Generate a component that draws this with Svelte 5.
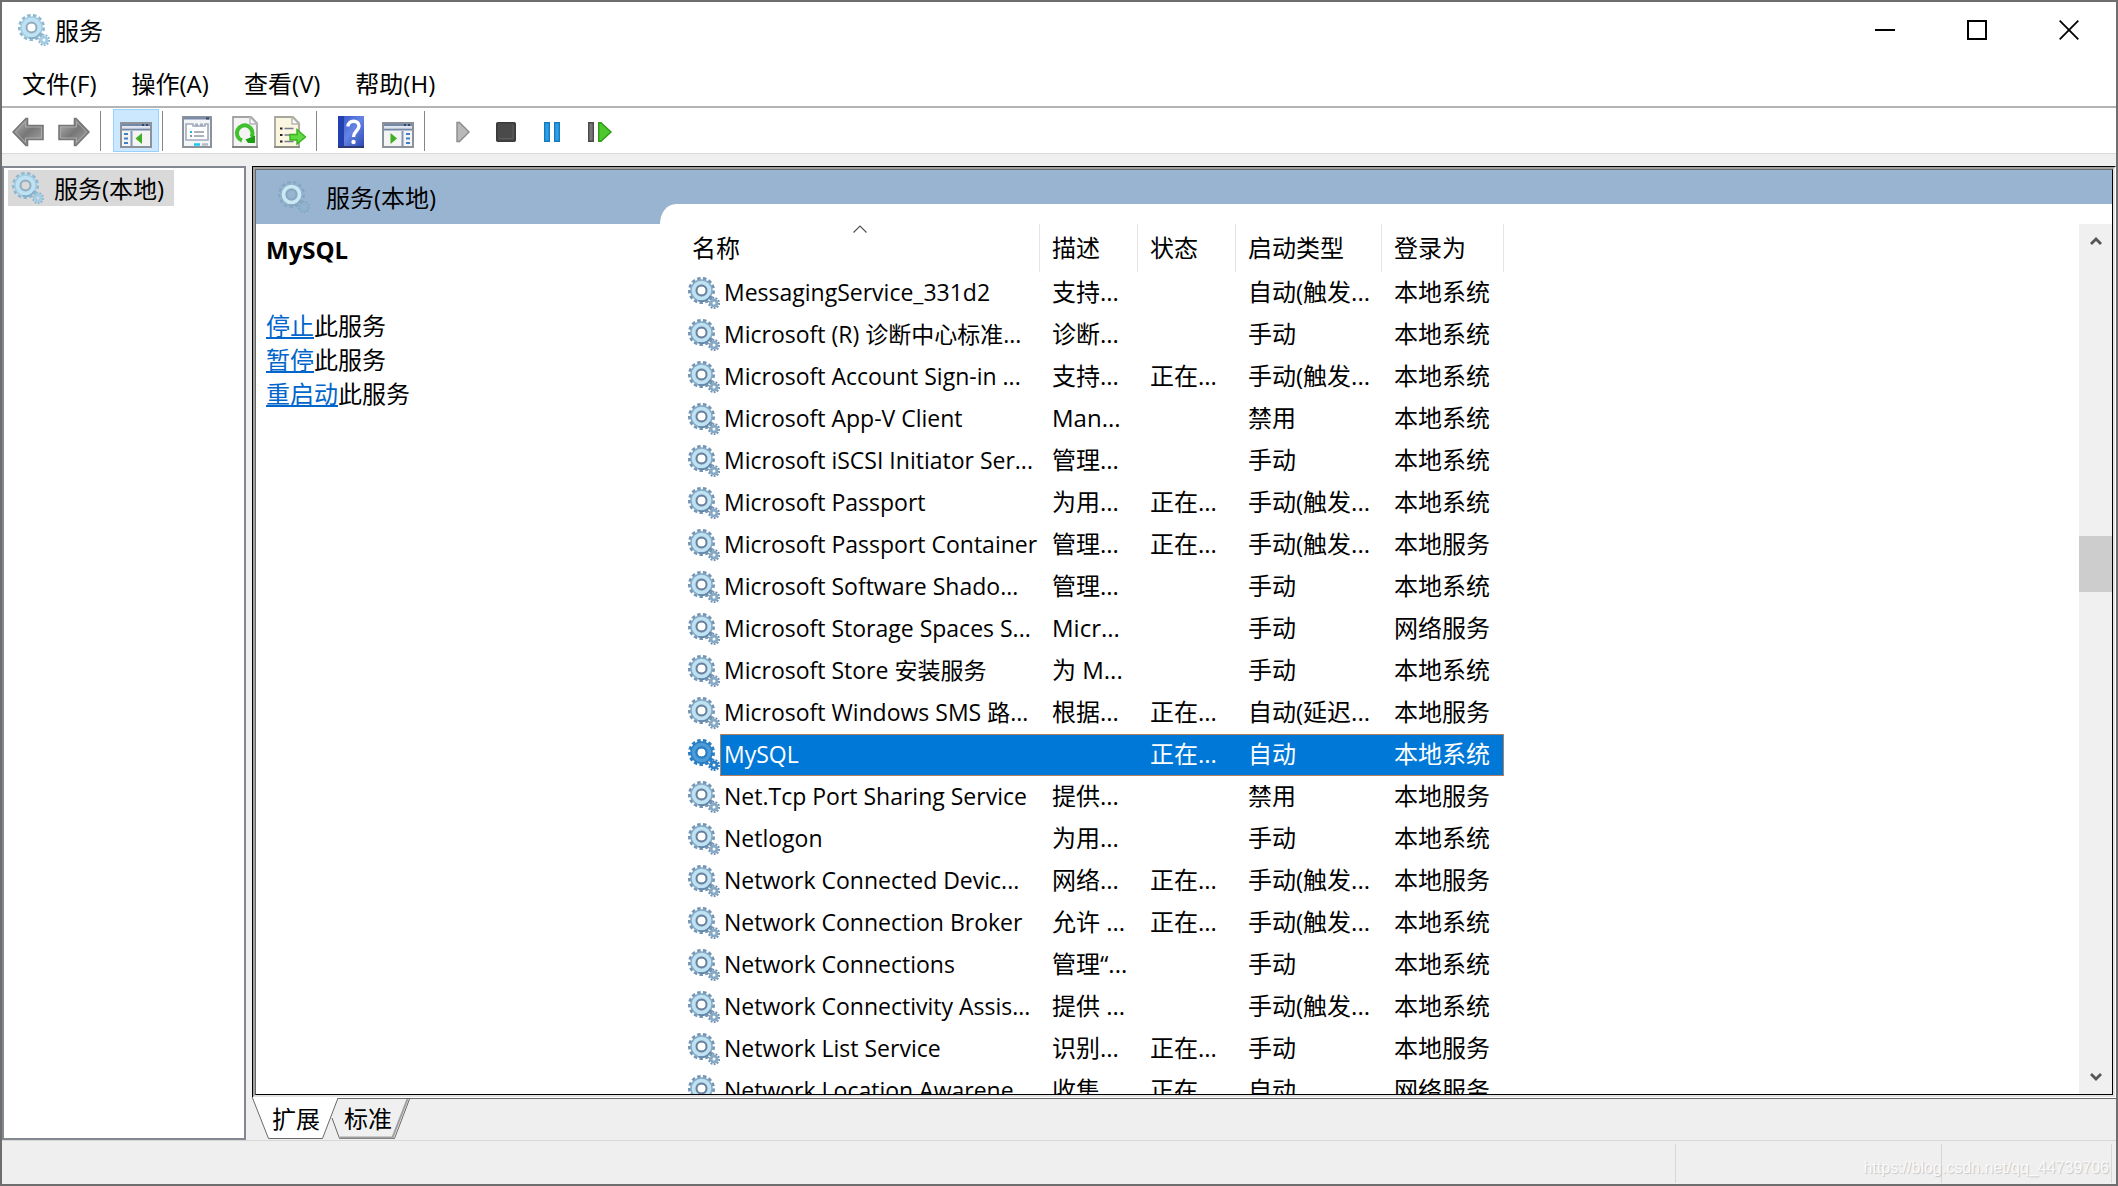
<script lang="ts">
	type Service = [string, string, string, string, string];

	const menus = ["文件(F)", "操作(A)", "查看(V)", "帮助(H)"];

	const services: Service[] = [
		["MessagingService_331d2", "支持...", "", "自动(触发...", "本地系统"],
		["Microsoft (R) 诊断中心标准...", "诊断...", "", "手动", "本地系统"],
		["Microsoft Account Sign-in ...", "支持...", "正在...", "手动(触发...", "本地系统"],
		["Microsoft App-V Client", "Man...", "", "禁用", "本地系统"],
		["Microsoft iSCSI Initiator Ser...", "管理...", "", "手动", "本地系统"],
		["Microsoft Passport", "为用...", "正在...", "手动(触发...", "本地系统"],
		["Microsoft Passport Container", "管理...", "正在...", "手动(触发...", "本地服务"],
		["Microsoft Software Shado...", "管理...", "", "手动", "本地系统"],
		["Microsoft Storage Spaces S...", "Micr...", "", "手动", "网络服务"],
		["Microsoft Store 安装服务", "为 M...", "", "手动", "本地系统"],
		["Microsoft Windows SMS 路...", "根据...", "正在...", "自动(延迟...", "本地服务"],
		["MySQL", "", "正在...", "自动", "本地系统"],
		["Net.Tcp Port Sharing Service", "提供...", "", "禁用", "本地服务"],
		["Netlogon", "为用...", "", "手动", "本地系统"],
		["Network Connected Devic...", "网络...", "正在...", "手动(触发...", "本地服务"],
		["Network Connection Broker", "允许 ...", "正在...", "手动(触发...", "本地系统"],
		["Network Connections", "管理“...", "", "手动", "本地系统"],
		["Network Connectivity Assis...", "提供 ...", "", "手动(触发...", "本地系统"],
		["Network List Service", "识别...", "正在...", "手动", "本地服务"],
		["Network Location Awarene...", "收集...", "正在...", "自动", "网络服务"],
	];

	let selected = $state(11);
	let treeShown = $state(true);
</script>

{#snippet gear(kind: string)}
	<svg class="gear {kind}" viewBox="0 0 32 32" width="32" height="32" aria-hidden="true">
		<g fill="none">
			<circle class="teeth" cx="13.5" cy="13.5" r="11.8" stroke-width="3.400" pathLength="26" stroke-dasharray="1.200 .800" />
			<circle class="ring" cx="13.5" cy="13.5" r="7.800" stroke-width="7" />
			<circle class="shine" cx="13.5" cy="13.5" r="8" stroke-width="3.600" />
			<circle class="rim" cx="13.5" cy="13.5" r="4.900" stroke-width="1.600" />
			<path class="shade" d="M22.500 19a10.800 10.800 0 0 1-12 4.800" stroke-width="1.600" />
			<circle class="teeth" cx="26" cy="26" r="4.800" stroke-width="2.600" pathLength="20" stroke-dasharray="1.200 .800" />
			<circle class="ring" cx="26" cy="26" r="2.900" stroke-width="2.800" />
		</g>
	</svg>
{/snippet}

<div class="window">
	<header class="titlebar">
		{@render gear("light")}
		<h1>服务</h1>
		<div class="controls">
			<button type="button" aria-label="最小化">
				<svg viewBox="0 0 20 20" width="20" height="20"><path d="M0 10h20" stroke="#000" stroke-width="2" /></svg>
			</button>
			<button type="button" aria-label="最大化">
				<svg viewBox="0 0 20 20" width="20" height="20"><rect x="1" y="1" width="18" height="18" fill="none" stroke="#000" stroke-width="2" /></svg>
			</button>
			<button type="button" aria-label="关闭">
				<svg viewBox="0 0 20 20" width="20" height="20"><path d="M.7.7l18.6 18.6M19.3.7L.7 19.3" stroke="#000" stroke-width="1.8" /></svg>
			</button>
		</div>
	</header>

	<nav class="menubar">
		{#each menus as menu}
			<button type="button">{menu}</button>
		{/each}
	</nav>

	<div class="toolbar">
		<button type="button" aria-label="后退">
			<svg viewBox="0 0 32 32" width="32" height="32">
				<defs>
					<linearGradient id="steel" x2="1" y2="1"><stop offset="0" stop-color="#bbb" /><stop offset=".5" stop-color="#777" /><stop offset="1" stop-color="#a8a8a8" /></linearGradient>
				</defs>
				<path d="M1 16L14 2.5h1.500v7H31v14H15.500v6H14z" fill="url(#steel)" stroke="#777" stroke-width="1.6" />
				<path d="M3.500 16L13.500 5.500v5.500H29.500v11H13.500v4.500z" fill="none" stroke="#aaa" stroke-width="1" />
			</svg>
		</button>
		<button type="button" aria-label="前进">
			<svg viewBox="0 0 32 32" width="32" height="32">
				<path d="M31 16L18 2.500h-1.500v7H1v14h15.500v6H18z" fill="url(#steel)" stroke="#777" stroke-width="1.600" />
				<path d="M28.500 16L18.500 5.500v5.500H2.500v11h16v4.500z" fill="none" stroke="#aaa" stroke-width="1" />
			</svg>
		</button>
		<span class="sep"></span>
		<button type="button" class:pressed={treeShown} aria-label="显示/隐藏控制台树" onclick={() => (treeShown = !treeShown)}>
			<svg viewBox="0 0 32 32" width="32" height="32">
				<rect x="1" y="7" width="30" height="24" fill="#f4f4f4" stroke="#8b9299" stroke-width="2" />
				<path d="M2 9h28M2 13.500h28" stroke="#7488a8" stroke-width="2" />
				<path d="M2 11.200h28" stroke="#dce3ee" stroke-width="2" />
				<path d="M22 9h2m2 0h2" stroke="#34476a" stroke-width="2" />
				<path d="M11.500 15v15" stroke="#8294b2" stroke-width="2" />
				<path d="M4 18h4m-4 4.500h4m-4 4.500h4" stroke="#3f7fc4" stroke-width="2" />
				<path d="M22 17v11l-6.500-5.500z" fill="#3eb022" />
			</svg>
		</button>
		<span class="sep"></span>
		<button type="button" aria-label="属性">
			<svg viewBox="0 0 32 32" width="32" height="32">
				<rect x="1" y="1" width="28" height="30" fill="#f3f5f7" stroke="#8a929b" stroke-width="2" />
				<path d="M2 2.500h26" stroke="#7a8baa" stroke-width="2" />
				<path d="M24 2.500h3" stroke="#34476a" stroke-width="2" />
				<path d="M4 8h7v2h12v-2h3v16H4z" fill="#fff" stroke="#a3abbc" stroke-width="1.600" />
				<path d="M13 9h3m2 0h3" stroke="#a3abbc" stroke-width="3" />
				<path d="M12 16h10m-10 4h10" stroke="#9298a4" stroke-width="1.600" />
				<path d="M8 16h2" stroke="#1fb6e8" stroke-width="2" /><path d="M8 20h2" stroke="#8892a0" stroke-width="2" />
				<path d="M12 28.500h6" stroke="#18c8f5" stroke-width="2.500" /><path d="M20 28.500h6" stroke="#b7bcc2" stroke-width="2.500" />
			</svg>
		</button>
		<button type="button" aria-label="刷新">
			<svg viewBox="0 0 32 32" width="32" height="32">
				<path d="M5 1h18l6 6v24H5z" fill="#f5f4f5" stroke="#a3a3a6" stroke-width="1.800" />
				<path d="M22 1v7h7z" fill="#fff" stroke="#b5b5b8" stroke-width="1.400" />
				<path d="M4 31h26" stroke="#777" stroke-width="1.500" />
				<path d="M14 24.500A7.800 7.800 0 1 1 23.500 21" fill="none" stroke="#3fc02c" stroke-width="4" />
				<path d="M17.500 23.500l9.500-4v7.500h-7z" fill="#1e9e13" />
			</svg>
		</button>
		<button type="button" aria-label="导出列表">
			<svg viewBox="0 0 32 32" width="32" height="32">
				<path d="M1 1h18l6 6v24H1z" fill="#fbf6df" stroke="#a8a69b" stroke-width="1.800" />
				<path d="M18 1v7h7z" fill="#fff" stroke="#b5b5b0" stroke-width="1.400" />
				<path d="M0 31h26" stroke="#86847a" stroke-width="1.500" />
				<path d="M6 12.500h2.500m-2.500 6.500h2.500m-2.500 6.500h2.500" stroke="#222" stroke-width="2" />
				<path d="M10.500 12.500h9m-9 6.500h6m-6 6.500h9" stroke="#7d7a94" stroke-width="1.600" />
				<path d="M16 18.500h7v-5l8.500 7.500-8.500 7v-4h-7z" fill="#63d944" stroke="#35b41f" stroke-width="1.400" />
			</svg>
		</button>
		<span class="sep"></span>
		<button type="button" class="help" aria-label="帮助">
			<svg viewBox="0 0 32 32" width="32" height="32">
				<defs>
					<linearGradient id="book" x2="1" y2="1"><stop offset="0" stop-color="#3152c8" /><stop offset=".5" stop-color="#6584e4" /><stop offset="1" stop-color="#2a46b0" /></linearGradient>
				</defs>
				<rect x="2" width="26" height="32" fill="url(#book)" />
				<path d="M2 0h6v32H2z" fill="#2240b0" />
				<path d="M2 31h26" stroke="#2b3a70" stroke-width="2" />
				<path d="M12 10.500c0-7 11-7 11-.5 0 5-5.500 5-5.500 11" fill="none" stroke="#fff" stroke-width="3.400" />
				<circle cx="17.500" cy="26" r="2.200" fill="#fff" />
			</svg>
		</button>
		<button type="button" aria-label="显示/隐藏操作窗格">
			<svg viewBox="0 0 32 32" width="32" height="32">
				<rect x="1" y="7" width="30" height="24" fill="#f4f4f4" stroke="#8b9299" stroke-width="2" />
				<path d="M2 9h28M2 13.500h28" stroke="#7488a8" stroke-width="2" />
				<path d="M2 11.200h28" stroke="#dce3ee" stroke-width="2" />
				<path d="M22 9h2m2 0h2" stroke="#34476a" stroke-width="2" />
				<path d="M20.500 15v15" stroke="#8294b2" stroke-width="2" />
				<path d="M24 18h4m-4 4.500h4m-4 4.500h4" stroke="#3f7fc4" stroke-width="2" />
				<path d="M8.500 17v11l6.500-5.500z" fill="#3eb022" />
			</svg>
		</button>
		<span class="sep"></span>
		<button type="button" aria-label="启动服务">
			<svg viewBox="0 0 32 32" width="32" height="32">
				<path d="M13 6.500h2.500L25 16l-9.500 9.500H13z" fill="#b9b9b9" stroke="#8a8a8a" stroke-width="1.400" />
			</svg>
		</button>
		<button type="button" aria-label="停止服务">
			<svg viewBox="0 0 32 32" width="32" height="32">
				<rect x="6.800" y="6.800" width="18.400" height="18.400" rx="1" fill="#4a4a4a" stroke="#3a3a3a" stroke-width="1.600" />
				<path d="M9 22.500h14V9" fill="none" stroke="#5f5f5f" stroke-width="1" />
			</svg>
		</button>
		<button type="button" aria-label="暂停服务">
			<svg viewBox="0 0 32 32" width="32" height="32">
				<path d="M8.700 6.700h4.600v18.600H8.700zM18.700 6.700h4.600v18.600h-4.600z" fill="#27a3e6" stroke="#1b78c0" stroke-width="1.400" />
			</svg>
		</button>
		<button type="button" aria-label="重新启动服务">
			<svg viewBox="0 0 32 32" width="32" height="32">
				<path d="M6.700 6.700h4.600v18.600H6.700z" fill="#777" stroke="#4a4a4a" stroke-width="1.400" />
				<path d="M16.700 6.700H19L29 16l-10 9.300h-2.300z" fill="#4fc72f" stroke="#2f9c15" stroke-width="1.400" />
			</svg>
		</button>
	</div>

	<div class="workspace">
		{#if treeShown}
			<aside class="tree">
				<button type="button" class="node">
					{@render gear("light")}
					<span>服务(本地)</span>
				</button>
			</aside>
		{/if}

		<div class="main">
			<div class="edge-outer">
				<div class="edge-mid">
					<div class="edge-inner">
						<div class="banner">
							<div class="banner-title">
								{@render gear("faded")}
								<span>服务(本地)</span>
							</div>
							<div class="notch"></div>
						</div>

						<div class="content">
							<section class="details">
								<h2>{services[selected][0]}</h2>
								<p><a href="#stop">停止</a>此服务</p>
								<p><a href="#pause">暂停</a>此服务</p>
								<p><a href="#restart">重启动</a>此服务</p>
							</section>

							<div class="list">
								<table>
									<colgroup>
										<col class="c-name" />
										<col class="c-short" />
										<col class="c-short" />
										<col class="c-start" />
										<col class="c-logon" />
									</colgroup>
									<thead>
										<tr>
											<th>
												名称
												<svg class="sort" viewBox="0 0 14 8" width="14" height="8" aria-hidden="true"><path d="M.5 7.500L7 1l6.500 6.500" fill="none" stroke="#555" stroke-width="1.200" /></svg>
											</th>
											<th>描述</th>
											<th>状态</th>
											<th>启动类型</th>
											<th>登录为</th>
										</tr>
									</thead>
									<tbody>
										{#each services as [name, desc, status, startup, logon], i}
											<tr class:selected={i == selected} onclick={() => (selected = i)}>
												<td class="name">
													<div class="name-wrap">
														{@render gear(i == selected ? "picked" : "plain")}
														<span>{name}</span>
													</div>
												</td>
												<td>{desc}</td>
												<td>{status}</td>
												<td>{startup}</td>
												<td>{logon}</td>
											</tr>
										{/each}
									</tbody>
								</table>
							</div>

							<div class="scrollbar">
								<button type="button" aria-label="向上滚动">
									<svg viewBox="0 0 12 10" width="12" height="10"><path d="M1 8l5-5 5 5" fill="none" stroke="#555" stroke-width="2.800" /></svg>
								</button>
								<div class="before"></div>
								<div class="thumb"></div>
								<div class="after"></div>
								<button type="button" aria-label="向下滚动">
									<svg viewBox="0 0 12 10" width="12" height="10"><path d="M1 2l5 5 5-5" fill="none" stroke="#555" stroke-width="2.800" /></svg>
								</button>
							</div>
						</div>
					</div>
				</div>
			</div>

			<div class="tabs">
				<svg class="tab-shapes" viewBox="0 0 160 42" width="160" height="42" aria-hidden="true">
					<path d="M80 20L87.500 40.500H142.500L157.500 1" fill="#f0f0f0" stroke="#696969" />
					<path d="M88 39.500H140.500L155.500 1" fill="none" stroke="#a0a0a0" stroke-width="2" />
					<path d="M86 .5H160" stroke="#696969" />
					<path d="M0 0L16.500 40.500H70.500L86 0z" fill="#fff" />
					<path d="M.5 0L16.500 40.500H70.500L86 0" fill="none" stroke="#696969" />
				</svg>
				<button type="button">扩展</button>
				<button type="button">标准</button>
			</div>
		</div>
	</div>

	<footer class="statusbar">
		<div class="cell grow"></div>
		<div class="cell wide"></div>
		<div class="cell narrow"></div>
		<span class="watermark">https://blog.csdn.net/qq_44739706</span>
	</footer>
</div>

<style>
:global(body) {
	margin: 0;
	background: #6e6e6e;
}

.window {
	box-sizing: border-box;
	height: 100vh;
	border: 2px solid #6e6e6e;
	background: #efefef;
	display: flex;
	flex-direction: column;
	overflow: hidden;
	font: 24px/34px "Open Sans", "Noto Sans CJK SC", sans-serif;
	color: #000;
}

button {
	border: none;
	padding: 0;
	background: none;
	font: inherit;
	color: inherit;
}

svg {
	display: block;
	flex: none;
}

/* Title bar and menus */
.titlebar {
	display: flex;
	align-items: center;
	height: 56px;
	padding-left: 16px;
	gap: 5px;
	background: #fff;
}

h1 {
	margin: 0;
	padding-top: 2px;
	font-size: 24px;
	font-weight: 400;
}

.controls {
	display: flex;
	align-self: stretch;
	margin: 0 1px 0 auto;
}

.controls button {
	width: 92px;
	display: flex;
	align-items: center;
	justify-content: center;
}

.menubar {
	display: flex;
	gap: 3px;
	height: 48px;
	padding-left: 4px;
	background: #fff;
	border-bottom: 2px solid #b4b4b4;
}

.menubar button {
	padding: 3px 16px 0;
	white-space: nowrap;
}

/* Toolbar */
.toolbar {
	display: flex;
	align-items: center;
	height: 45px;
	padding-left: 3px;
	background: #fff;
	border-bottom: 1px solid #d9d9d9;
}

.toolbar button {
	box-sizing: border-box;
	width: 46px;
	height: 43px;
	padding-top: 2px;
	display: flex;
	align-items: center;
	justify-content: center;
}

.toolbar button.pressed {
	background: #cce8ff;
	border: 1px solid #99d1ff;
}

.sep {
	width: 1px;
	height: 40px;
	margin: 0 12px 0 3px;
	background: #868686;
}

/* Tree and main pane */
.workspace {
	flex: 1;
	min-height: 0;
	display: flex;
	gap: 6px;
	padding-top: 12px;
}

.tree {
	box-sizing: border-box;
	width: 244px;
	border: 2px solid #828790;
	background: #fff;
	padding: 2px 4px;
}

.node {
	display: flex;
	align-items: center;
	gap: 10px;
	height: 36px;
	padding: 0 10px 0 4px;
	background: #d9d9d9;
	white-space: nowrap;
}

.node span,
.banner-title span {
	padding-top: 2px;
}

.main {
	flex: 1;
	min-width: 0;
	display: flex;
	flex-direction: column;
}

.edge-outer,
.edge-mid,
.edge-inner {
	flex: 1;
	min-height: 0;
	display: flex;
	flex-direction: column;
	border-style: solid;
}

.edge-outer {
	border-width: 1px;
	border-color: #000 #fff #fff #000;
}

.edge-mid {
	border-width: 2px;
	border-color: #a0a0a0 #e3e3e3 #e3e3e3 #a0a0a0;
}

.edge-inner {
	border-width: 1px;
	border-color: #696969 #000 #000 #696969;
	background: #fff;
}

.banner {
	display: flex;
	height: 54px;
	background: #99b4d1;
}

.banner-title {
	display: flex;
	align-items: center;
	gap: 16px;
	width: 382px;
	padding-left: 22px;
}

.notch {
	flex: 1;
	height: 20px;
	align-self: flex-end;
	background: #fff;
	border-top-left-radius: 16px 20px;
}

.content {
	flex: 1;
	min-height: 0;
	display: flex;
}

.details {
	box-sizing: border-box;
	width: 424px;
	padding: 9px 10px;
}

h2 {
	margin: 0 0 42px;
	font-size: 24px;
	font-weight: 700;
}

p {
	margin: 0;
}

a {
	color: #0066cc;
	text-decoration: underline;
}

.list {
	flex: 1;
	min-width: 0;
	overflow: hidden;
}

/* Service table */
table {
	width: 824px;
	table-layout: fixed;
	border-collapse: collapse;
}

.c-name {
	width: 360px;
}

.c-short {
	width: 98px;
}

.c-start {
	width: 146px;
}

.c-logon {
	width: 122px;
}

th {
	position: relative;
	box-sizing: border-box;
	height: 48px;
	padding: 0 0 0 12px;
	text-align: left;
	font-weight: 400;
	background: linear-gradient(#e5e5e5, #e5e5e5) right / 1px 100% no-repeat;
}

.sort {
	position: absolute;
	top: 1px;
	left: 173px;
}

td {
	height: 40px;
	padding: 0 0 2px 12px;
	white-space: nowrap;
}

td.name {
	height: 42px;
	padding: 0 0 0 8px;
	font-size: 23px;
}

.name-wrap {
	display: flex;
	align-items: center;
}

.name-wrap span {
	box-sizing: border-box;
	flex: 1;
	height: 42px;
	line-height: 40px;
	padding-left: 4px;
}

.selected {
	color: #fff;
}

.selected td:not(.name),
.selected span {
	background: #0078d7;
	box-shadow: inset 0 1px #b08060, inset 0 -1px #b08060;
}

.selected span {
	box-shadow: inset 0 1px #b08060, inset 0 -1px #b08060, inset 1px 0 #b08060;
}

.selected td:last-child {
	box-shadow: inset 0 1px #b08060, inset 0 -1px #b08060, inset -1px 0 #b08060;
}

/* Gears */
.teeth {
	stroke: #7395b3;
}

.ring {
	stroke: #86aac6;
}

.shine {
	stroke: #bfe2f3;
}

.rim {
	stroke: #6a7f99;
}

.shade {
	stroke: #5f84a6;
}

.light .teeth {
	stroke: #8fb8d0;
}

.light .ring {
	stroke: #a2cde4;
}

.light .rim {
	stroke: #93a9b8;
}

.light .shade {
	stroke: #7fa9c4;
}

.faded .teeth {
	stroke: #86a6c2;
}

.faded .ring {
	stroke: #8fb3cf;
}

.faded .shine {
	stroke: #cbe8f3;
}

.faded .rim {
	stroke: #8aa5bf;
}

.faded .shade {
	stroke: #86a6c2;
}

.picked .teeth,
.picked .ring,
.picked .rim,
.picked .shade {
	stroke: #2a7fc4;
}

.picked .shine {
	stroke: #4a9bd8;
}

/* Scrollbar */
.scrollbar {
	width: 33px;
	background: #f0f0f0;
	display: flex;
	flex-direction: column;
}

.scrollbar button {
	height: 34px;
	display: flex;
	align-items: center;
	justify-content: center;
}

.before {
	flex: 278;
}

.thumb {
	height: 56px;
	background: #cdcdcd;
}

.after {
	flex: 468;
}

/* Tabs under the pane */
.tabs {
	position: relative;
	display: flex;
	gap: 24px;
	height: 41px;
	padding-left: 20px;
	border-top: 1px solid #696969;
}

.tab-shapes {
	position: absolute;
	top: -1px;
	left: 0;
}

.tabs button {
	position: relative;
	padding-bottom: 2px;
}

/* Status bar */
.statusbar {
	position: relative;
	display: flex;
	height: 39px;
	padding: 3px 4px 1px 0;
	border-top: 1px solid #d7d7d7;
}

.cell {
	box-sizing: border-box;
	border-right: 1px solid #d7d7d7;
}

.grow {
	flex: 1;
}

.wide {
	width: 266px;
}

.narrow {
	width: 170px;
}

.watermark {
	position: absolute;
	right: 7px;
	bottom: 5px;
	font: 16px/22px "Liberation Sans", sans-serif;
	color: #fafafa;
	text-shadow: 1px 1px 1px #c4c4c4;
}
</style>
